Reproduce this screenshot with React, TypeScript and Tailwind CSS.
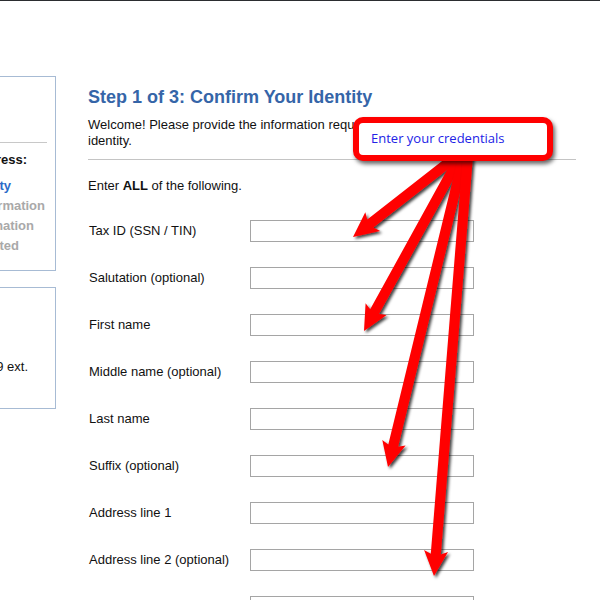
import React from "react";

type Pt = [number, number];

function arrowPoints(s: Pt, t: Pt, w = 5, L = 22, W = 12): string {
  const dx = t[0] - s[0];
  const dy = t[1] - s[1];
  const len = Math.hypot(dx, dy);
  const ux = dx / len;
  const uy = dy / len;
  const nx = -uy;
  const ny = ux;
  const bx = t[0] - ux * L;
  const by = t[1] - uy * L;
  const pts: Pt[] = [
    [s[0] + nx * w, s[1] + ny * w],
    [bx + nx * w, by + ny * w],
    [bx + nx * W - ux * 3, by + ny * W - uy * 3],
    [t[0], t[1]],
    [bx - nx * W - ux * 3, by - ny * W - uy * 3],
    [bx - nx * w, by - ny * w],
    [s[0] - nx * w, s[1] - ny * w],
  ];
  return pts.map((p) => `${p[0].toFixed(1)},${p[1].toFixed(1)}`).join(" ");
}

const arrows: { s: Pt; t: Pt }[] = [
  { s: [458, 154], t: [353, 236] },
  { s: [461, 154], t: [364, 330] },
  { s: [464, 154], t: [388, 466] },
  { s: [468, 154], t: [434, 575] },
];

const labels = [
  "Tax ID (SSN / TIN)",
  "Salutation (optional)",
  "First name",
  "Middle name (optional)",
  "Last name",
  "Suffix (optional)",
  "Address line 1",
  "Address line 2 (optional)",
  "City",
];

export default function App() {
  return (
    <div className="relative w-[600px] h-[600px] overflow-hidden bg-white border-t border-[#2b2d30] font-['Liberation_Sans',Arial,sans-serif] text-[13px] text-[#111]">
      <div className="flex">
        {/* Left column */}
        <div className="shrink-0 w-[256px] ml-[-200px] pt-[75px]">
          <div className="border border-[#a7bbd4] pb-[14px]">
            <div className="h-px bg-[#c8c8c8] mt-[65px] mr-[8px]" />
            <div className="mt-[7px] leading-[20px] font-bold whitespace-nowrap">
              <div className="text-right pr-[28px] text-[#111]">Your Progress:</div>
              <div className="text-right pr-[44px] mt-[6px] text-[#2d6bc8]">Confirm Identity</div>
              <div className="text-right pr-[10px] text-[#a9a9a9]">Account Information</div>
              <div className="text-right pr-[21px] text-[#a9a9a9]">Contact Information</div>
              <div className="text-right pr-[36px] text-[#a9a9a9]">Completed</div>
            </div>
          </div>
          <div className="mt-[16px] border border-[#a7bbd4] pt-[69px] pb-[31px]">
            <div className="text-right pr-[27px] leading-[20px] whitespace-nowrap">
              1-800-555-0199 ext.
            </div>
          </div>
        </div>

        {/* Main column */}
        <div className="shrink-0 ml-[32px] w-[488px] pt-[85px]">
          <h1 className="text-[18px] leading-[22px] font-bold text-[#3565a8]">
            Step 1 of 3: Confirm Your Identity
          </h1>
          <p className="mt-[9px] leading-[16px]">
            Welcome! Please provide the information requested below so we can verify your identity.
          </p>
          <div className="h-px bg-[#c4c4c4] mt-[10px]" />
          <p className="mt-[18px] leading-[16px]">
            Enter <span className="font-bold">ALL</span> of the following.
          </p>
          <div className="mt-[13px]">
            {labels.map((l) => (
              <div key={l} className="flex items-center h-[47px]">
                <div className="w-[162px] pl-px whitespace-nowrap">{l}</div>
                <input
                  type="text"
                  className="w-[224px] h-[22px] border border-[#a5a5a5] bg-white outline-none"
                />
              </div>
            ))}
          </div>
        </div>
      </div>

      {/* Arrows overlay */}
      <svg
        className="absolute left-0 top-0 pointer-events-none"
        width="600"
        height="600"
        viewBox="0 0 600 600"
      >
        <defs>
          <filter id="sh" x="-20%" y="-20%" width="140%" height="140%">
            <feDropShadow dx="2" dy="2" stdDeviation="1.4" floodColor="#000" floodOpacity="0.75" />
          </filter>
        </defs>
        {arrows.map((a, i) => (
          <polygon key={i} points={arrowPoints(a.s, a.t)} fill="#ff0000" filter="url(#sh)" />
        ))}
      </svg>

      {/* Callout */}
      <div className="absolute left-[353px] top-[116px] w-[200px] h-[44px] rounded-[10px] border-[6px] border-[#ff0000] bg-white shadow-[2px_3px_4px_rgba(0,0,0,0.6)] flex items-center pl-[12px]">
        <span className="font-['Open_Sans','Noto_Sans',sans-serif] text-[13px] text-[#2222e6] whitespace-nowrap">
          Enter your credentials
        </span>
      </div>
    </div>
  );
}
